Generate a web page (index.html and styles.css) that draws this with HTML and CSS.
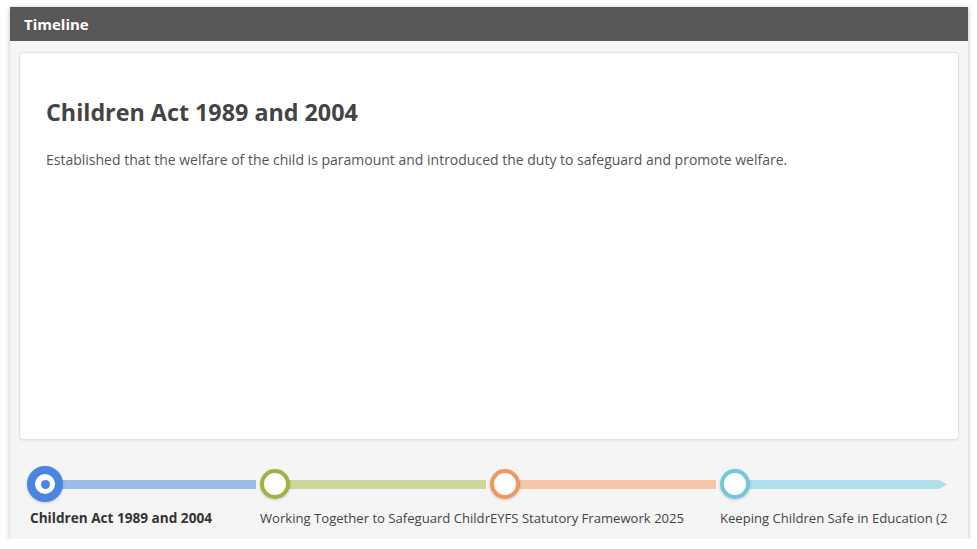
FILE: index.html
```html
<!DOCTYPE html>
<html>
<head>
<meta charset="utf-8">
<link rel="stylesheet" href="styles.css">
</head>
<body>
<div class="panel">
  <div class="panel-header">Timeline</div>
  <div class="panel-body">
    <div class="card">
      <h2 class="card-title">Children Act 1989 and 2004</h2>
      <p class="card-text">Established that the welfare of the child is paramount and introduced the duty to safeguard and promote welfare.</p>
    </div>
    <div class="timeline">
      <div class="tl-item tl-blue active">
        <div class="tl-marker"><span class="tl-line"></span><span class="tl-dot"></span></div>
        <div class="tl-label">Children Act 1989 and 2004</div>
      </div>
      <div class="tl-item tl-green">
        <div class="tl-marker"><span class="tl-line"></span><span class="tl-dot"></span></div>
        <div class="tl-label">Working Together to Safeguard Children 2023</div>
      </div>
      <div class="tl-item tl-orange">
        <div class="tl-marker"><span class="tl-line"></span><span class="tl-dot"></span></div>
        <div class="tl-label">EYFS Statutory Framework 2025</div>
      </div>
      <div class="tl-item tl-cyan last">
        <div class="tl-marker"><span class="tl-line"></span><span class="tl-dot"></span></div>
        <div class="tl-label">Keeping Children Safe in Education (2024)</div>
      </div>
    </div>
  </div>
</div>
</body>
</html>
```
FILE: styles.css
```css
html, body {
  margin: 0;
  padding: 0;
  background: #ffffff;
}
body {
  padding: 7px 10px 0 10px;
  font-family: "Open Sans", "Liberation Sans", sans-serif;
}
.panel {
  width: 958px;
  background: #f5f5f5;
  box-shadow: 0 1px 5px rgba(0, 0, 0, 0.28);
}
.panel-header {
  height: 34px;
  background: #575757;
  color: #ffffff;
  font-weight: 700;
  font-size: 15px;
  line-height: 34px;
  padding-left: 14px;
}
.panel-body {
  padding: 11px 9px 12px 9px;
}
.card {
  height: 388px;
  box-sizing: border-box;
  background: #ffffff;
  border: 1px solid #e2e2e2;
  border-radius: 4px;
  box-shadow: 0 1px 2px rgba(0, 0, 0, 0.06);
  padding: 42px 26px 0 26px;
}
.card-title {
  margin: 0;
  font-size: 23.3px;
  font-weight: 700;
  color: #444444;
  line-height: 34px;
}
.card-text {
  margin: 20px 0 0 0;
  font-size: 14px;
  color: #555555;
  line-height: 22px;
}
.timeline {
  display: flex;
  margin: 29px 11px 0 11px;
}
.tl-item {
  flex: 0 0 230px;
  width: 230px;
}
.tl-item.last {
  flex: 0 0 228px;
  width: 228px;
}
.tl-marker {
  position: relative;
  height: 30px;
}
.tl-line {
  position: absolute;
  left: 15px;
  right: 4px;
  top: 11px;
  height: 9px;
}
.tl-dot {
  position: absolute;
  left: 0;
  top: 0;
  width: 30px;
  height: 30px;
  box-sizing: border-box;
  border-radius: 50%;
  border: 4px solid;
  background: #ffffff;
  box-shadow: 0 1px 3px rgba(0, 0, 0, 0.18);
}
.active .tl-dot {
  left: -3px;
  top: -3px;
  width: 36px;
  height: 36px;
  border-width: 8px;
}
.active .tl-dot::after {
  content: "";
  position: absolute;
  left: 50%;
  top: 50%;
  width: 9px;
  height: 9px;
  margin: -4.5px 0 0 -4.5px;
  border-radius: 50%;
  background: #4a86e0;
}
.last .tl-line {
  right: 1px;
  clip-path: polygon(0 0, calc(100% - 8px) 0, 100% 50%, calc(100% - 8px) 100%, 0 100%);
}
.tl-label {
  margin-top: 10px;
  font-size: 13.1px;
  line-height: 18px;
  color: #444444;
  white-space: nowrap;
  overflow: hidden;
}
.active .tl-label {
  font-size: 13.6px;
  font-weight: 700;
  color: #333333;
}
.tl-blue .tl-line { background: #9bbce9; }
.tl-blue .tl-dot { border-color: #4a86e0; }
.tl-green .tl-line { background: #cdd799; }
.tl-green .tl-dot { border-color: #a3b23f; }
.tl-orange .tl-line { background: #f5c6a6; }
.tl-orange .tl-dot { border-color: #ef975c; }
.tl-cyan .tl-line { background: #afdfea; }
.tl-cyan .tl-dot { border-color: #70c8dc; }
```
